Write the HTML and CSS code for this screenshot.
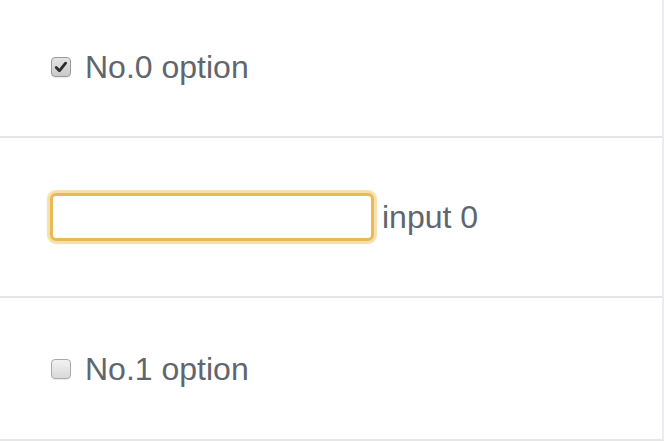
FILE: index.html
```html
<!DOCTYPE html>
<html>
<head>
<meta charset="utf-8">
<link rel="stylesheet" href="styles.css">
</head>
<body>
<div class="list">
  <div class="row row-1">
    <label class="check">
      <span class="box checked">
        <svg viewBox="0 0 18 18" width="18" height="18"><path d="M4.2 9.6 L7.4 12.8 L13.6 5.2" fill="none" stroke="#2d2d2d" stroke-width="2.8" stroke-linecap="round" stroke-linejoin="round"/></svg>
      </span>
      <span class="text">No.0 option</span>
    </label>
  </div>
  <div class="row row-2">
    <input class="field" type="text">
    <span class="text">input 0</span>
  </div>
  <div class="row row-3">
    <label class="check">
      <span class="box"></span>
      <span class="text">No.1 option</span>
    </label>
  </div>
</div>
</body>
</html>
```

FILE: styles.css
```css
html, body {
  margin: 0;
  padding: 0;
  background: #ffffff;
}
body {
  font-family: "Liberation Sans", Arial, sans-serif;
  color: #5f666d;
  width: 664px;
  height: 442px;
  overflow: hidden;
}
.list {
  width: 662px;
  border-right: 2px solid #ececf0;
}
.row {
  display: flex;
  align-items: center;
  padding-left: 50px;
  box-sizing: border-box;
  border-bottom: 2px solid #e6e6e8;
}
.row-1 { height: 138px; padding-bottom: 3px; }
.row-2 { height: 160px; }
.row-3 { height: 143px; }
.check {
  display: flex;
  align-items: center;
}
.box {
  width: 20px;
  height: 20px;
  margin-left: 1px;
  border: 1px solid #a9a9a9;
  border-radius: 4px;
  background: linear-gradient(#f2f2f2, #d9d9d9);
  box-sizing: border-box;
  display: flex;
  align-items: center;
  justify-content: center;
  box-shadow: 0 1px 1px rgba(0,0,0,0.08);
}
.box.checked {
  background: linear-gradient(#e4e4e4, #c9c9c9);
  border-color: #9a9a9a;
}
.box svg { display: block; }
.text {
  font-size: 32px;
  line-height: 36px;
  margin-left: 14px;
}
.row-2 .text {
  margin-left: 8px;
}
.field {
  width: 324px;
  height: 48px;
  margin: 0;
  box-sizing: border-box;
  border: 3px solid #e8b957;
  border-radius: 6px;
  background: #fff;
  box-shadow: 0 0 1px 3px rgba(240, 196, 100, 0.55);
  outline: none;
  padding: 0;
}
```
